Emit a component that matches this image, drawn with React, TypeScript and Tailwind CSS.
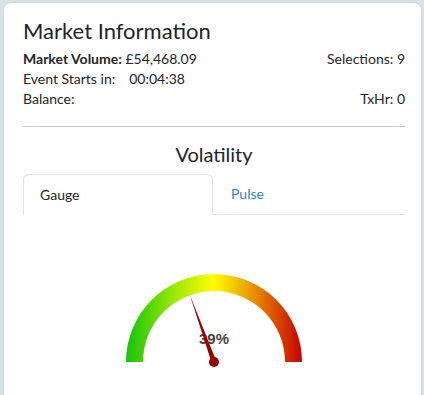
import React from 'react';

const Gauge: React.FC<{ value: number }> = ({ value }) => {
  const cx = 100;
  const cy = 95;
  const a = Math.PI - (value / 100) * Math.PI;
  const dx = Math.cos(a);
  const dy = -Math.sin(a);
  const len = 72;
  const tip = `${cx + dx * len},${cy + dy * len}`;
  const b1 = `${cx - dy * 2.5},${cy + dx * 2.5}`;
  const b2 = `${cx + dy * 2.5},${cy - dx * 2.5}`;
  return (
    <svg width="200" height="110" viewBox="0 0 200 110">
      <defs>
        <linearGradient id="g" x1="12" y1="0" x2="188" y2="0" gradientUnits="userSpaceOnUse">
          <stop offset="0" stopColor="#14c40c" />
          <stop offset="0.28" stopColor="#9ee804" />
          <stop offset="0.5" stopColor="#ffff00" />
          <stop offset="0.72" stopColor="#e89200" />
          <stop offset="1" stopColor="#c80000" />
        </linearGradient>
      </defs>
      <path d="M 12 95 A 88 88 0 0 1 188 95 L 171 95 A 71 71 0 0 0 29 95 Z" fill="url(#g)" />
      <text x="100" y="77" textAnchor="middle" fontFamily="'Liberation Sans', Arial, sans-serif" fontWeight="bold" fontSize="15" fill="#444">
        {value}%
      </text>
      <polygon points={`${b1} ${tip} ${b2}`} fill="#990000" />
      <circle cx={cx} cy={cy} r="5" fill="#990000" />
    </svg>
  );
};

export default function App() {
  return (
    <div className="min-h-screen bg-[#d9e1e8] pt-[2px] pl-[3px] pr-[2px]" style={{ fontFamily: "Lato, 'Noto Sans', sans-serif" }}>
      <div className="h-[410px] rounded-lg border border-[#cdd6de] bg-white pl-[19px] pr-[16px] pt-[14px] text-[#212529]">
        <h1 className="text-[22px] leading-[28px]">Market Information</h1>
        <div className="mt-[4px] text-[14px] leading-[20px]">
          <div className="flex justify-between">
            <span>
              <span className="font-bold">Market Volume:</span> £54,468.09
            </span>
            <span>Selections: 9</span>
          </div>
          <div>
            Event Starts in:<span className="ml-[14px]">00:04:38</span>
          </div>
          <div className="flex justify-between">
            <span>Balance:</span>
            <span>TxHr: 0</span>
          </div>
        </div>
        <hr className="mt-[17px] border-t border-[#c3c8cd]" />
        <h2 className="mt-[14px] text-center text-[20px] leading-[26px]">Volatility</h2>
        <div className="mt-[7px] flex border-b border-[#dee2e6] text-[14px]">
          <div className="-mb-px flex-1 rounded-t-md border border-[#dee2e6] border-b-white bg-white px-[16px] py-[9px]">
            Gauge
          </div>
          <div className="flex-1 px-[18px] py-[9px] text-[#2f7fd8]">Pulse</div>
        </div>
        <div className="mt-[52px] flex justify-center">
          <Gauge value={39} />
        </div>
      </div>
    </div>
  );
}
